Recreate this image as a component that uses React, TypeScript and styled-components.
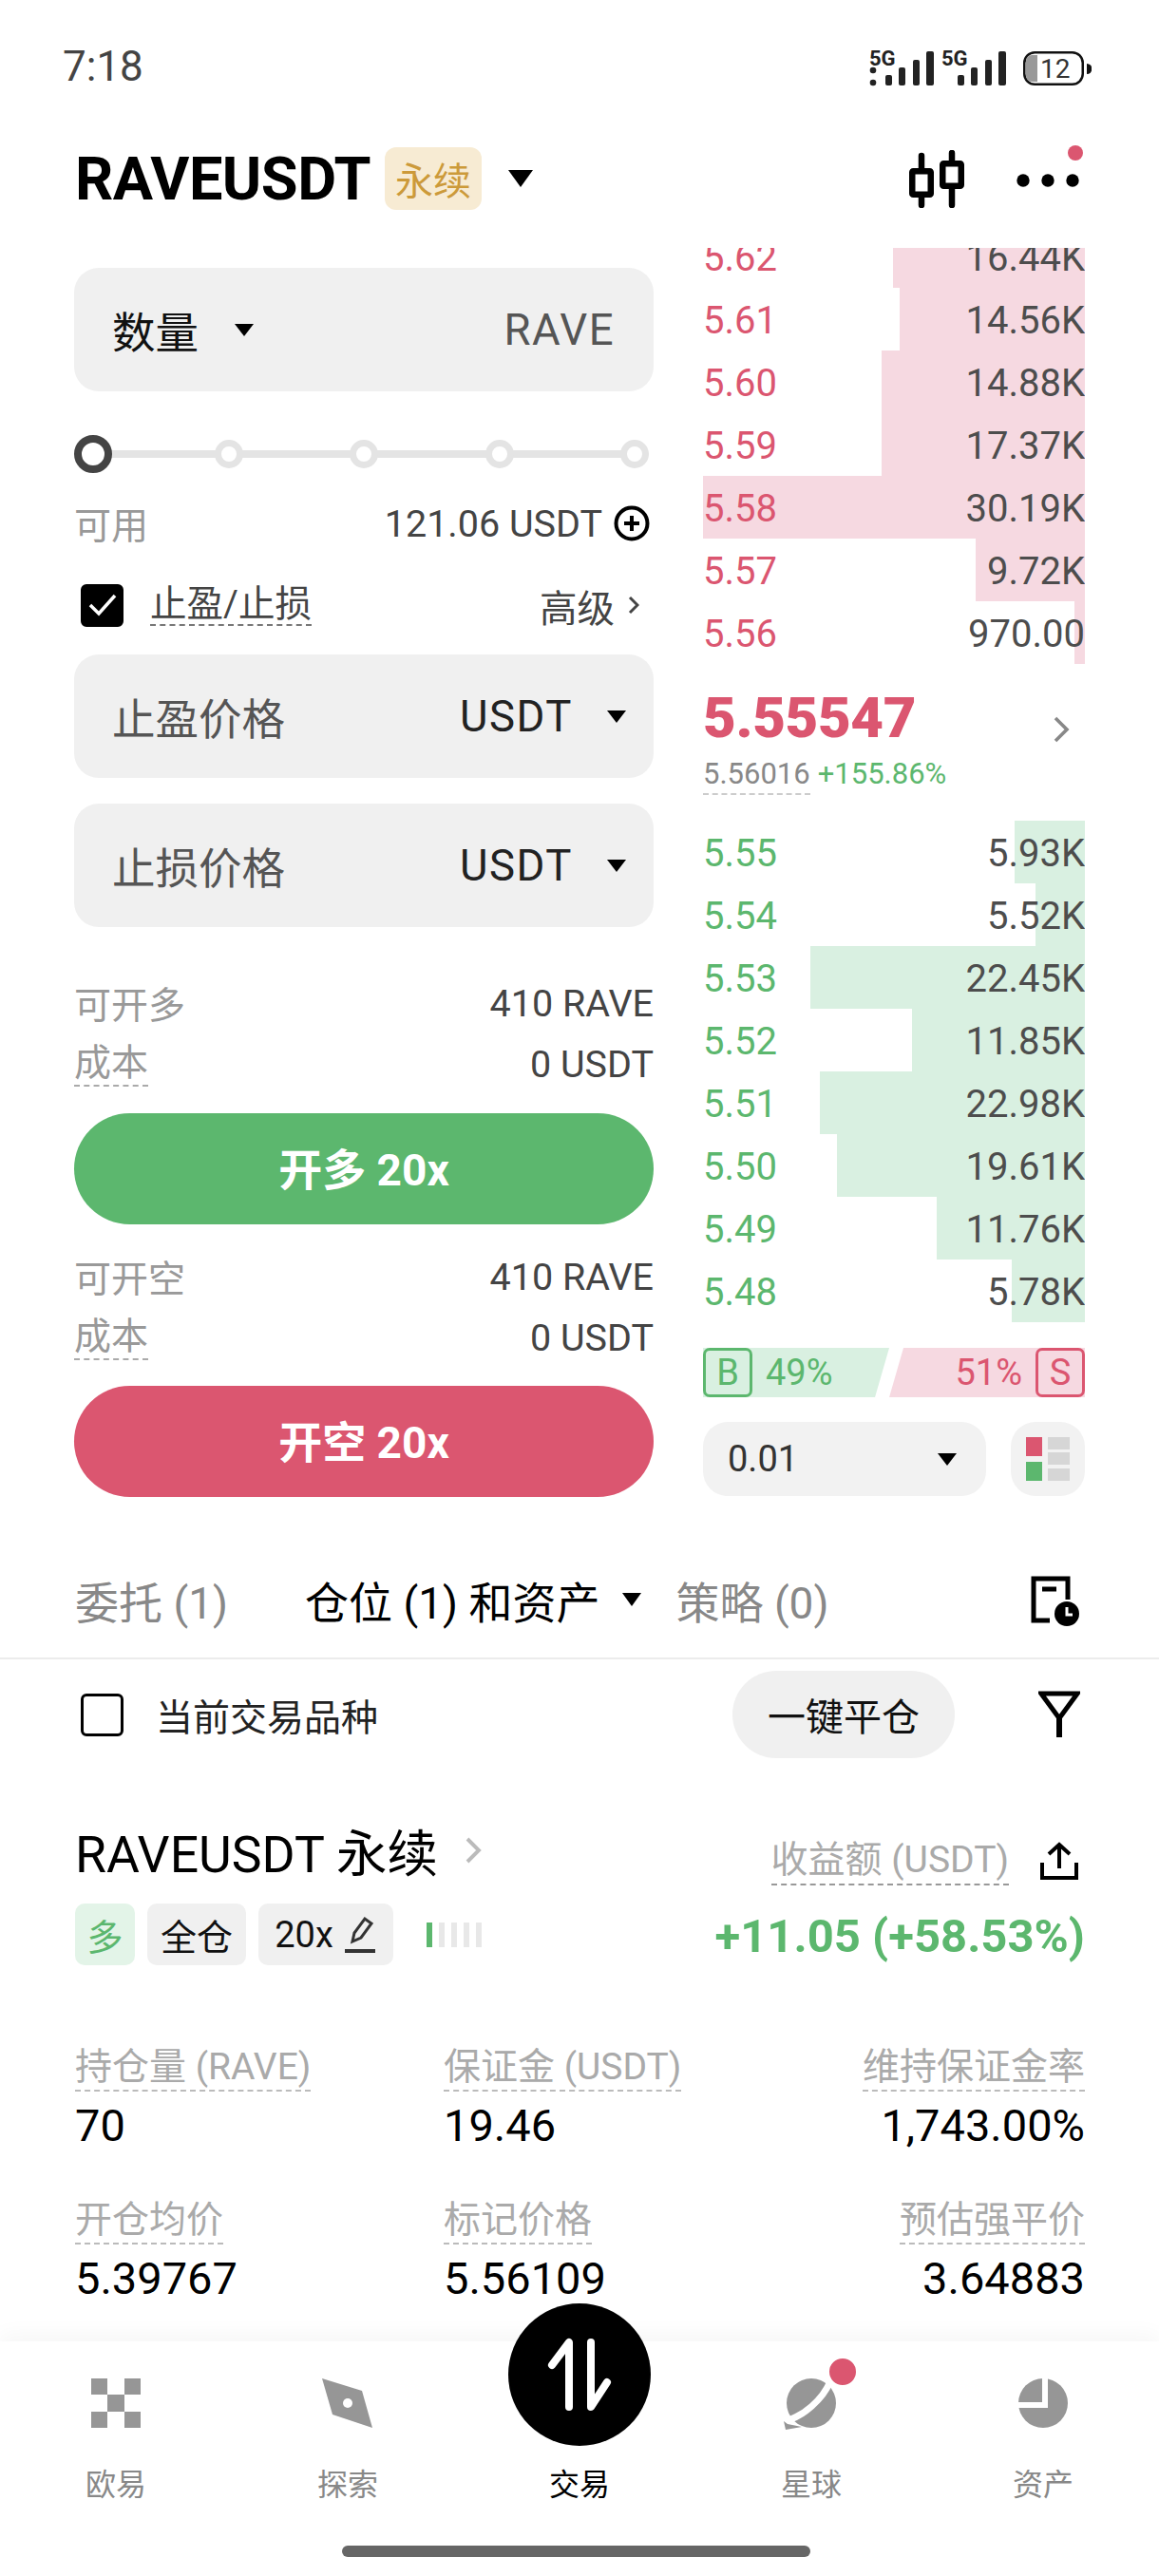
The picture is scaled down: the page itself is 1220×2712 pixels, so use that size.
import { createGlobalStyle, styled } from "styled-components"

const GlobalStyle = createGlobalStyle`
    html, body {
        margin: 0;
        padding: 0;
        background: #ffffff;
    }
    * {
        box-sizing: border-box;
    }
`

const FONT = `Roboto, "Noto Sans CJK SC", sans-serif`
const GREEN = "#5cb76e"
const RED = "#db5670"

const Page = styled.div`
    width: 1220px;
    height: 2712px;
    position: relative;
    overflow: hidden;
    display: flex;
    flex-direction: column;
    background: #fff;
    font-family: ${FONT};
    color: #000;
`

const StatusBar = styled.div`
    height: 140px;
    padding: 0 71px 0 66px;
    display: flex;
    align-items: center;
    justify-content: space-between;
    span {
        font-size: 44px;
        color: #444;
    }
`

const Header = styled.div`
    height: 96px;
    margin-bottom: 25px;
    padding: 0 84px 0 79px;
    display: flex;
    align-items: center;
`

const Symbol = styled.div`
    font-size: 63px;
    font-weight: 700;
    letter-spacing: -0.5px;
`

const Badge = styled.div`
    margin-left: 15px;
    width: 102px;
    height: 66px;
    border-radius: 12px;
    background: #f7ebd3;
    color: #cc9a3a;
    font-size: 40px;
    display: flex;
    align-items: center;
    justify-content: center;
`

const Caret = styled.i<{ $w: number; $left?: number }>`
    display: block;
    flex: none;
    width: 0;
    height: 0;
    margin-left: ${p => p.$left || 0}px;
    border-left: ${p => p.$w / 2}px solid transparent;
    border-right: ${p => p.$w / 2}px solid transparent;
    border-top: ${p => p.$w * 0.68}px solid #000;
`

const HeaderIcons = styled.div`
    margin-left: auto;
    display: flex;
    align-items: center;
    gap: 55px;
`

const HeaderDots = styled.div`
    position: relative;
    height: 16px;
    margin-top: 4px;
    svg {
        display: block;
    }
`

const HeaderDot = styled.i`
    position: absolute;
    right: -4px;
    top: -29px;
    width: 16px;
    height: 16px;
    border-radius: 50%;
    background: ${RED};
`

const Main = styled.div`
    display: grid;
    grid-template-columns: 610px 402px;
    gap: 52px;
    padding-left: 78px;
`

const FormCol = styled.div`
    padding-top: 21px;
    display: flex;
    flex-direction: column;
`

const Field = styled.div<{ $top?: number }>`
    height: 130px;
    margin-top: ${p => p.$top || 0}px;
    padding: 0 41px 0 40px;
    border-radius: 26px;
    background: #f0f0f0;
    display: flex;
    align-items: center;
    justify-content: space-between;
    font-size: 45.5px;
    color: #555;
`

const Unit = styled.span`
    letter-spacing: 1.5px;
`

const FieldSelect = styled.div`
    display: flex;
    align-items: center;
    gap: 38px;
    color: #111;
`

const FieldUnit = styled.div`
    margin-right: -12px;
    display: flex;
    align-items: center;
    gap: 36px;
    color: #222;
`

const Slider = styled.div`
    height: 40px;
    margin-top: 46px;
    padding: 0 5px;
    display: flex;
    align-items: center;
    justify-content: space-between;
    position: relative;
    &::before {
        content: "";
        position: absolute;
        left: 20px;
        right: 15px;
        top: 16px;
        height: 8px;
        background: #e4e4e4;
    }
`

const Knob = styled.div<{ $active?: boolean }>`
    position: relative;
    width: ${p => (p.$active ? 40 : 30)}px;
    height: ${p => (p.$active ? 40 : 30)}px;
    margin: ${p => (p.$active ? "0 -5px" : "0")};
    border-radius: 50%;
    background: #fff;
    border: ${p => (p.$active ? "8px solid #444" : "7px solid #e4e4e4")};
`

const InfoRow = styled.div<{ $top?: number; $h?: number }>`
    height: ${p => p.$h || 44}px;
    margin-top: ${p => p.$top || 0}px;
    display: flex;
    align-items: center;
    justify-content: space-between;
    font-size: 39.5px;
    color: #444;
`

const MutedLabel = styled.span<{ $dashed?: boolean }>`
    color: #999;
    font-size: 39px;
    margin-top: -3px;
    ${p => p.$dashed && "border-bottom: 2px dashed #aaa; line-height: 46px; margin-top: 0;"}
`

const Inline = styled.div<{ $gap?: number; $pad?: string }>`
    display: flex;
    align-items: center;
    gap: ${p => p.$gap ?? 8}px;
    padding: ${p => p.$pad || "0"};
`

const TpslLabel = styled.span`
    color: #444;
    font-size: 38.5px;
    line-height: 42px;
    border-bottom: 2px dashed #777;
`

const CheckBox = styled.div<{ $checked?: boolean }>`
    width: 45px;
    height: 45px;
    margin-left: 7px;
    flex: none;
    border-radius: 6px;
    background: ${p => (p.$checked ? "#000" : "#fff")};
    border: 4px solid #000;
    display: flex;
    align-items: center;
    justify-content: center;
`

const TradeButton = styled.div<{ $color: string; $top: number }>`
    height: 117px;
    margin-top: ${p => p.$top}px;
    padding-bottom: 5px;
    border-radius: 59px;
    background: ${p => p.$color};
    color: #fff;
    font-size: 46px;
    font-weight: 700;
    display: flex;
    align-items: center;
    justify-content: center;
`

const BookCol = styled.div`
    overflow: hidden;
`

const AskList = styled.div`
    margin-top: -24px;
`

const BookRow = styled.div<{ $side: "ask" | "bid" }>`
    height: 66px;
    padding-top: 3px;
    position: relative;
    display: flex;
    align-items: center;
    justify-content: space-between;
    font-size: 40px;
    color: #4d4d4d;
    b {
        font-weight: 400;
        color: ${p => (p.$side === "ask" ? RED : GREEN)};
    }
    span, b {
        position: relative;
    }
`

const DepthBar = styled.div<{ $side: "ask" | "bid" }>`
    position: absolute;
    top: 0;
    right: 0;
    bottom: 0;
    background: ${p => (p.$side === "ask" ? "#f6d9e1" : "#d9f0e1")};
`

const Mid = styled.div`
    height: 165px;
    padding-top: 25px;
    position: relative;
`

const LastPrice = styled.div`
    font-size: 60px;
    font-weight: 900;
    line-height: 64px;
    color: ${RED};
    letter-spacing: -0.4px;
`

const MidSub = styled.div`
    margin-top: 7px;
    font-size: 31px;
    line-height: 40px;
    display: flex;
    gap: 8px;
    color: ${GREEN};
    span {
        color: #888;
        border-bottom: 2px dashed #ccc;
    }
`

const MidArrow = styled.div`
    position: absolute;
    right: 16px;
    top: 54px;
`

const Ratio = styled.div`
    height: 52px;
    margin-top: 27px;
    display: flex;
    justify-content: space-between;
    font-size: 38px;
`

const RatioSide = styled.div<{ $side: "buy" | "sell" }>`
    width: ${p => (p.$side === "buy" ? 197 : 207)}px;
    display: flex;
    align-items: center;
    gap: 14px;
    flex-direction: ${p => (p.$side === "buy" ? "row" : "row-reverse")};
    color: ${p => (p.$side === "buy" ? GREEN : RED)};
    background: ${p => (p.$side === "buy" ? "#d9f0e1" : "#f6d9e1")};
    clip-path: ${p =>
        p.$side === "buy"
            ? "polygon(0 0, 100% 0, calc(100% - 15px) 100%, 0 100%)"
            : "polygon(15px 0, 100% 0, 100% 100%, 0 100%)"};
`

const RatioTag = styled.div`
    width: 52px;
    height: 52px;
    border: 3px solid currentColor;
    border-radius: 7px;
    display: flex;
    align-items: center;
    justify-content: center;
`

const BookControls = styled.div`
    margin-top: 26px;
    display: flex;
    justify-content: space-between;
`

const StepSelect = styled.div`
    width: 298px;
    height: 78px;
    padding: 0 31px 0 26px;
    border-radius: 26px;
    background: #f2f2f2;
    font-size: 38px;
    color: #333;
    display: flex;
    align-items: center;
    justify-content: space-between;
`

const LayoutButton = styled.div`
    width: 78px;
    height: 78px;
    border-radius: 26px;
    background: #f2f2f2;
    display: flex;
    align-items: center;
    justify-content: center;
`

const Tabs = styled.div`
    height: 122px;
    margin-top: 49px;
    padding: 0 83px 2px 79px;
    border-bottom: 2px solid #ececec;
    display: flex;
    align-items: center;
    font-size: 46px;
`

const Tab = styled.div<{ $active?: boolean; $left?: number }>`
    margin-left: ${p => p.$left || 0}px;
    color: ${p => (p.$active ? "#000" : "#888")};
    display: flex;
    align-items: center;
    gap: 24px;
`

const HistoryIcon = styled.svg`
    margin: 4px 0 0 auto;
`

const FilterRow = styled.div`
    height: 116px;
    padding: 0 83px 0 85px;
    display: flex;
    align-items: center;
    font-size: 39px;
    color: #222;
`

const FilterCheck = styled(CheckBox)`
    margin: 0 34px 0 0;
    border-width: 3px;
`

const CloseAll = styled.div`
    margin-left: auto;
    margin-right: 88px;
    width: 234px;
    height: 92px;
    border-radius: 46px;
    background: #f0f0f0;
    font-size: 40px;
    display: flex;
    align-items: center;
    justify-content: center;
    color: #111;
`

const Position = styled.div`
    padding: 52px 78px 0 79px;
`

const PosHead = styled.div`
    height: 70px;
    display: flex;
    align-items: center;
    justify-content: space-between;
`

const PosTitle = styled.div`
    padding-bottom: 5px;
    font-size: 53.5px;
    display: flex;
    align-items: center;
    gap: 28px;
`

const PnlLabel = styled.span`
    font-size: 39px;
    color: #aaa;
    line-height: 50px;
    border-bottom: 2px dashed #999;
`

const TagRow = styled.div`
    margin-top: 19px;
    display: flex;
    align-items: center;
`

const Tag = styled.div<{ $green?: boolean; $w: number }>`
    width: ${p => p.$w}px;
    height: 65px;
    margin-right: 13px;
    border-radius: 10px;
    background: ${p => (p.$green ? "#e3f4e8" : "#f0f0f0")};
    color: ${p => (p.$green ? GREEN : "#111")};
    font-size: 38px;
    display: flex;
    align-items: center;
    justify-content: center;
    gap: 10px;
`

const LevBars = styled.div`
    margin-left: 22px;
    display: flex;
    gap: 7px;
`

const LevBar = styled.i<{ $on?: boolean }>`
    display: block;
    width: 6px;
    height: 26px;
    background: ${p => (p.$on ? GREEN : "#e8e8e8")};
`

const Pnl = styled.div`
    margin-left: auto;
    padding-top: 4px;
    font-size: 49px;
    font-weight: 700;
    color: ${GREEN};
`

const StatGrid = styled.div`
    margin-top: 83px;
    display: grid;
    grid-template-columns: 388px 1fr auto;
    row-gap: 47px;
`

const Stat = styled.div<{ $right?: boolean }>`
    display: flex;
    flex-direction: column;
    align-items: ${p => (p.$right ? "flex-end" : "flex-start")};
    gap: 8px;
    label {
        height: 50px;
        font-size: 39px;
        line-height: 48px;
        color: #aaa;
        border-bottom: 2px dashed #bbb;
    }
    strong {
        height: 56px;
        font-size: 47px;
        line-height: 56px;
        font-weight: 400;
        color: #000;
    }
`

const Nav = styled.div`
    margin-top: auto;
    height: 247px;
    position: relative;
    background: #fff;
    box-shadow: 0 -8px 20px rgba(0, 0, 0, 0.035);
`

const NavTabs = styled.div`
    display: grid;
    grid-template-columns: repeat(5, 244px);
`

const NavTab = styled.div<{ $active?: boolean }>`
    padding-top: 39px;
    display: flex;
    flex-direction: column;
    align-items: center;
    font-size: 32px;
    color: ${p => (p.$active ? "#000" : "#888")};
    span {
        margin-top: 40px;
        line-height: 40px;
    }
`

const NavIcon = styled.div`
    position: relative;
    width: 52px;
    height: 52px;
    svg {
        display: block;
        overflow: visible;
    }
`

const TradeCircle = styled.div`
    position: absolute;
    left: -49px;
    top: -79px;
    width: 150px;
    height: 150px;
    border-radius: 50%;
    background: #000;
    display: flex;
    align-items: center;
    justify-content: center;
`

const NavDot = styled.i`
    position: absolute;
    right: -24px;
    top: -24px;
    width: 34px;
    height: 34px;
    border-radius: 50%;
    background: ${RED};
    border: 3px solid #fff;
`

const HomeBar = styled.div`
    position: absolute;
    left: 360px;
    bottom: 20px;
    width: 493px;
    height: 12px;
    border-radius: 6px;
    background: #666;
`

const asks: [string, string, number][] = [
    ["5.62", "16.44K", 202],
    ["5.61", "14.56K", 195],
    ["5.60", "14.88K", 214],
    ["5.59", "17.37K", 214],
    ["5.58", "30.19K", 402],
    ["5.57", "9.72K", 115],
    ["5.56", "970.00", 11],
]

const bids: [string, string, number][] = [
    ["5.55", "5.93K", 74],
    ["5.54", "5.52K", 52],
    ["5.53", "22.45K", 289],
    ["5.52", "11.85K", 182],
    ["5.51", "22.98K", 279],
    ["5.50", "19.61K", 261],
    ["5.49", "11.76K", 156],
    ["5.48", "5.78K", 77],
]

const stats = [
    { label: "持仓量 (RAVE)", value: "70" },
    { label: "保证金 (USDT)", value: "19.46" },
    { label: "维持保证金率", value: "1,743.00%", right: true },
    { label: "开仓均价", value: "5.39767" },
    { label: "标记价格", value: "5.56109" },
    { label: "预估强平价", value: "3.64883", right: true },
]

const Chevron = ({ size, color, sw = 3 }: { size: number; color: string; sw?: number }) => (
    <svg width={size * 0.6} height={size} viewBox="0 0 12 20" fill="none">
        <path d="M2 2l8 8-8 8" stroke={color} strokeWidth={sw} />
    </svg>
)

const SignalBars = ({ x }: { x: number }) => (
    <>
        <text x={x - 17} y="18" fontSize="22" fontWeight="700" fontFamily="Roboto">5G</text>
        <rect x={x} y="28" width="7" height="11" rx="2" />
        <rect x={x + 14} y="20" width="7" height="19" rx="2" />
        <rect x={x + 29} y="12" width="7" height="27" rx="2" />
        <rect x={x + 43} y="3" width="8" height="36" rx="2" />
    </>
)

function StatusIcons() {
    return (
        <svg width="234" height="46" viewBox="0 -4 234 46" fill="#222">
            <SignalBars x={17} />
            <circle cx="4" cy="23" r="3.3" />
            <circle cx="4" cy="36" r="3.3" />
            <SignalBars x={93} />
            <rect x="163.25" y="4.25" width="61.5" height="33.5" rx="11" fill="none" stroke="#111" strokeWidth="2.5" />
            <path d="M165 13a6 6 0 0 1 6-6h6v28h-6a6 6 0 0 1-6-6z" fill="#999" />
            <text x="180" y="31" fontSize="28" fontFamily="Roboto" fill="#333">12</text>
            <path d="M229 16a5.5 5.5 0 0 1 0 11z" fill="#111" />
        </svg>
    )
}

function App() {
    return (
        <Page>
            <GlobalStyle />
            <StatusBar>
                <span>7:18</span>
                <StatusIcons />
            </StatusBar>
            <Header>
                <Symbol>RAVEUSDT</Symbol>
                <Badge>永续</Badge>
                <Caret $w={27} $left={28} />
                <HeaderIcons>
                    <svg width="58" height="61" viewBox="0 0 58 61" fill="none" stroke="#000" strokeWidth="6.5">
                        <path d="M13 6v14M13 50v8M45 3v9M45 41v17" strokeLinecap="round" />
                        <rect x="3.25" y="22.25" width="19.5" height="24.5" rx="1" />
                        <rect x="35.25" y="14.25" width="19.5" height="23.5" rx="1" />
                    </svg>
                    <HeaderDots>
                        <svg width="66" height="16" viewBox="0 0 66 16" fill="#000">
                            <circle cx="7" cy="8" r="6.7" />
                            <circle cx="33" cy="8" r="6.7" />
                            <circle cx="59" cy="8" r="6.7" />
                        </svg>
                        <HeaderDot />
                    </HeaderDots>
                </HeaderIcons>
            </Header>
            <Main>
                <FormCol>
                    <Field>
                        <FieldSelect>
                            <span>数量</span>
                            <Caret $w={20} />
                        </FieldSelect>
                        <Unit>RAVE</Unit>
                    </Field>
                    <Slider>
                        <Knob $active />
                        <Knob />
                        <Knob />
                        <Knob />
                        <Knob />
                    </Slider>
                    <InfoRow $h={50} $top={28}>
                        <MutedLabel>可用</MutedLabel>
                        <Inline $gap={12} $pad="0 4px 0 0">
                            <span>121.06 USDT</span>
                            <svg width="38" height="38" viewBox="0 0 38 38" fill="none" stroke="#000" strokeWidth="4">
                                <circle cx="19" cy="19" r="16.5" />
                                <path d="M19 11v16M11 19h16" />
                            </svg>
                        </Inline>
                    </InfoRow>
                    <InfoRow $h={50} $top={36}>
                        <Inline $gap={28}>
                            <CheckBox $checked>
                                <svg width="32" height="26" viewBox="0 0 32 26" fill="none" stroke="#fff" strokeWidth="3.5">
                                    <path d="M3 13l9 9L29 3" />
                                </svg>
                            </CheckBox>
                            <TpslLabel>止盈/止损</TpslLabel>
                        </Inline>
                        <Inline $gap={14} $pad="0 15px 0 0">
                            <span>高级</span>
                            <Chevron size={20} color="#444" />
                        </Inline>
                    </InfoRow>
                    <Field $top={27}>
                        <span>止盈价格</span>
                        <FieldUnit>
                            <Unit>USDT</Unit>
                            <Caret $w={20} />
                        </FieldUnit>
                    </Field>
                    <Field $top={27}>
                        <span>止损价格</span>
                        <FieldUnit>
                            <Unit>USDT</Unit>
                            <Caret $w={20} />
                        </FieldUnit>
                    </Field>
                    <InfoRow $top={58}>
                        <MutedLabel>可开多</MutedLabel>
                        <span>410 RAVE</span>
                    </InfoRow>
                    <InfoRow $top={20}>
                        <MutedLabel $dashed>成本</MutedLabel>
                        <span>0 USDT</span>
                    </InfoRow>
                    <TradeButton $color={GREEN} $top={30}>开多 20x</TradeButton>
                    <InfoRow $top={33}>
                        <MutedLabel>可开空</MutedLabel>
                        <span>410 RAVE</span>
                    </InfoRow>
                    <InfoRow $top={20}>
                        <MutedLabel $dashed>成本</MutedLabel>
                        <span>0 USDT</span>
                    </InfoRow>
                    <TradeButton $color={RED} $top={29}>开空 20x</TradeButton>
                </FormCol>
                <BookCol>
                    <AskList>
                        {asks.map(([price, size, depth]) => (
                            <BookRow $side="ask" key={price}>
                                <DepthBar $side="ask" style={{ width: depth }} />
                                <b>{price}</b>
                                <span>{size}</span>
                            </BookRow>
                        ))}
                    </AskList>
                    <Mid>
                        <LastPrice>5.55547</LastPrice>
                        <MidSub>
                            <span>5.56016</span>+155.86%
                        </MidSub>
                        <MidArrow>
                            <Chevron size={30} color="#888" sw={2.4} />
                        </MidArrow>
                    </Mid>
                    {bids.map(([price, size, depth]) => (
                        <BookRow $side="bid" key={price}>
                            <DepthBar $side="bid" style={{ width: depth }} />
                            <b>{price}</b>
                            <span>{size}</span>
                        </BookRow>
                    ))}
                    <Ratio>
                        <RatioSide $side="buy">
                            <RatioTag>B</RatioTag>49%
                        </RatioSide>
                        <RatioSide $side="sell">
                            <RatioTag>S</RatioTag>51%
                        </RatioSide>
                    </Ratio>
                    <BookControls>
                        <StepSelect>
                            <span>0.01</span>
                            <Caret $w={20} />
                        </StepSelect>
                        <LayoutButton>
                            <svg width="46" height="46" viewBox="0 0 46 46">
                                <rect width="17" height="20" fill={RED} />
                                <rect y="26" width="17" height="20" fill={GREEN} />
                                <rect x="23" width="23" height="13" fill="#d6d6d6" />
                                <rect x="23" y="16" width="23" height="13" fill="#d6d6d6" />
                                <rect x="23" y="33" width="23" height="13" fill="#d6d6d6" />
                            </svg>
                        </LayoutButton>
                    </BookControls>
                </BookCol>
            </Main>
            <Tabs>
                <Tab>委托 (1)</Tab>
                <Tab $active $left={81}>
                    <span>仓位 (1) 和资产</span>
                    <Caret $w={21} />
                </Tab>
                <Tab $left={36}>策略 (0)</Tab>
                <HistoryIcon width="52" height="54" viewBox="0 0 52 54" fill="none">
                    <path d="M20 47H3V3h36v22" stroke="#000" strokeWidth="5" />
                    <path d="M12 14h15" stroke="#000" strokeWidth="5" />
                    <circle cx="38" cy="40" r="13" fill="#000" />
                    <path d="M38 33v8h6" stroke="#fff" strokeWidth="3" />
                </HistoryIcon>
            </Tabs>
            <FilterRow>
                <FilterCheck />
                <span>当前交易品种</span>
                <CloseAll>一键平仓</CloseAll>
                <svg width="44" height="50" viewBox="0 0 44 50" fill="none" stroke="#000" strokeWidth="5">
                    <path d="M3 3h38L22 29z" />
                    <path d="M22 27v22" strokeWidth="6" />
                </svg>
            </FilterRow>
            <Position>
                <PosHead>
                    <PosTitle>
                        <span>RAVEUSDT 永续</span>
                        <Chevron size={30} color="#bbb" sw={2.6} />
                    </PosTitle>
                    <Inline $gap={33} $pad="18px 7px 0 0">
                        <PnlLabel>收益额 (USDT)</PnlLabel>
                        <svg width="40" height="40" viewBox="0 0 40 40" fill="none" stroke="#000" strokeWidth="4">
                            <path d="M20 28V3M9 13L20 3l11 10M2 22v16h36V22" />
                        </svg>
                    </Inline>
                </PosHead>
                <TagRow>
                    <Tag $green $w={63}>多</Tag>
                    <Tag $w={104}>全仓</Tag>
                    <Tag $w={142}>
                        20x
                        <svg width="36" height="40" viewBox="0 0 36 40" fill="none" stroke="#333" strokeWidth="3">
                            <path d="M10 27l2-9L23 3l7 5-11 15z" />
                            <path d="M2 37h32" strokeWidth="4" />
                        </svg>
                    </Tag>
                    <LevBars>
                        <LevBar $on />
                        <LevBar />
                        <LevBar />
                        <LevBar />
                        <LevBar />
                    </LevBars>
                    <Pnl>+11.05 (+58.53%)</Pnl>
                </TagRow>
                <StatGrid>
                    {stats.map(s => (
                        <Stat $right={s.right} key={s.label}>
                            <label>{s.label}</label>
                            <strong>{s.value}</strong>
                        </Stat>
                    ))}
                </StatGrid>
            </Position>
            <Nav>
                <NavTabs>
                    <NavTab>
                        <NavIcon>
                            <svg width="52" height="52" viewBox="0 0 52 52" fill="#969696">
                                <rect width="17" height="17" />
                                <rect x="35" width="17" height="17" />
                                <rect x="17" y="17" width="18" height="18" />
                                <rect y="35" width="17" height="17" />
                                <rect x="35" y="35" width="17" height="17" />
                            </svg>
                        </NavIcon>
                        <span>欧易</span>
                    </NavTab>
                    <NavTab>
                        <NavIcon>
                            <svg width="52" height="52" viewBox="0 0 52 52">
                                <path d="M-1 0L41 13 52 52 10 38z" fill="#969696" />
                                <circle cx="26" cy="26" r="5" fill="#fff" />
                            </svg>
                        </NavIcon>
                        <span>探索</span>
                    </NavTab>
                    <NavTab $active>
                        <NavIcon>
                            <TradeCircle>
                                <svg width="66" height="76" viewBox="0 0 66 76" fill="none" stroke="#fff" strokeWidth="8" strokeLinecap="round" strokeLinejoin="round">
                                    <path d="M4 28L22 4v68" />
                                    <path d="M45 4v68l17-26" />
                                </svg>
                            </TradeCircle>
                        </NavIcon>
                        <span>交易</span>
                    </NavTab>
                    <NavTab>
                        <NavIcon>
                            <svg width="52" height="52" viewBox="0 0 52 52" fill="none">
                                <circle cx="26" cy="26" r="26" fill="#969696" />
                                <path d="M46 3C38 22 18 40 -2 45" stroke="#fff" strokeWidth="7" />
                                <path d="M-3 45l4 3 15 3-17 3z" fill="#969696" />
                            </svg>
                            <NavDot />
                        </NavIcon>
                        <span>星球</span>
                    </NavTab>
                    <NavTab>
                        <NavIcon>
                            <svg width="52" height="52" viewBox="0 0 52 52" fill="none">
                                <circle cx="26" cy="26" r="26" fill="#969696" />
                                <path d="M0 28h28V0" stroke="#fff" strokeWidth="6" />
                            </svg>
                        </NavIcon>
                        <span>资产</span>
                    </NavTab>
                </NavTabs>
                <HomeBar />
            </Nav>
        </Page>
    )
}

export default App
